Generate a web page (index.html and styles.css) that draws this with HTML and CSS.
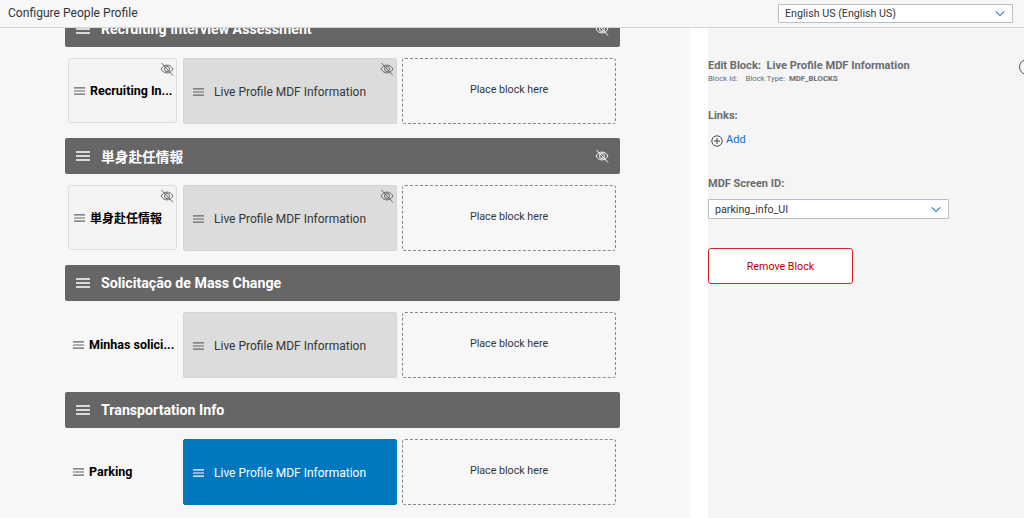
FILE: index.html
```html
<!DOCTYPE html>
<html lang="en">
<head>
<meta charset="utf-8">
<title>Configure People Profile</title>
<link rel="stylesheet" href="styles.css">
</head>
<body>
<svg class="defs" width="0" height="0" aria-hidden="true">
  <symbol id="menu" viewBox="0 0 14 10"><path d="M0 1h14M0 5h14M0 9h14" fill="none" stroke="currentColor" stroke-width="1.4"/></symbol>
  <symbol id="eye" viewBox="0 0 14 14"><g fill="none" stroke="currentColor" stroke-width="1"><path d="M1 7c1.6-2.6 3.6-3.9 6-3.9s4.400 1.300 6 3.900c-1.600 2.600-3.600 3.900-6 3.900S2.600 9.600 1 7z"/><circle cx="7" cy="7" r="2.500"/><path d="M1.500 1l11.500 12.500"/></g></symbol>
  <symbol id="chev" viewBox="0 0 12 8"><path d="M1 1.500l5 5 5-5" fill="none" stroke="currentColor" stroke-width="1.300"/></symbol>
</svg>
<header class="topbar">
  <h1 class="page-title">Configure People Profile</h1>
  <div class="select select-lang"><span>English US (English US)</span><svg class="chev"><use href="#chev"/></svg></div>
</header>
<div class="body">
  <main class="canvas">
    <div class="scroller">
      <section class="section">
        <div class="bar"><svg class="bar-menu"><use href="#menu"/></svg><span class="bar-title">Recruiting Interview Assessment</span><svg class="bar-eye"><use href="#eye"/></svg></div>
        <div class="row">
          <div class="sub boxed"><svg class="sub-menu"><use href="#menu"/></svg><span class="sub-title">Recruiting In...</span><svg class="eye-corner"><use href="#eye"/></svg></div>
          <div class="block"><svg class="block-menu"><use href="#menu"/></svg><span>Live Profile MDF Information</span><svg class="eye-corner"><use href="#eye"/></svg></div>
          <div class="slot">Place block here</div>
        </div>
      </section>
      <section class="section">
        <div class="bar"><svg class="bar-menu"><use href="#menu"/></svg><span class="bar-title bar-cjk" lang="ja">単身赴任情報</span><svg class="bar-eye"><use href="#eye"/></svg></div>
        <div class="row">
          <div class="sub boxed"><svg class="sub-menu"><use href="#menu"/></svg><span class="sub-title sub-cjk" lang="ja">単身赴任情報</span><svg class="eye-corner"><use href="#eye"/></svg></div>
          <div class="block"><svg class="block-menu"><use href="#menu"/></svg><span>Live Profile MDF Information</span><svg class="eye-corner"><use href="#eye"/></svg></div>
          <div class="slot">Place block here</div>
        </div>
      </section>
      <section class="section">
        <div class="bar"><svg class="bar-menu"><use href="#menu"/></svg><span class="bar-title">Solicitação de Mass Change</span></div>
        <div class="row">
          <div class="sub"><svg class="sub-menu"><use href="#menu"/></svg><span class="sub-title">Minhas solici...</span></div>
          <div class="block"><svg class="block-menu"><use href="#menu"/></svg><span>Live Profile MDF Information</span></div>
          <div class="slot">Place block here</div>
        </div>
      </section>
      <section class="section">
        <div class="bar"><svg class="bar-menu"><use href="#menu"/></svg><span class="bar-title">Transportation Info</span></div>
        <div class="row">
          <div class="sub"><svg class="sub-menu"><use href="#menu"/></svg><span class="sub-title">Parking</span></div>
          <div class="block selected"><svg class="block-menu"><use href="#menu"/></svg><span>Live Profile MDF Information</span></div>
          <div class="slot">Place block here</div>
        </div>
      </section>
    </div>
  </main>
  <aside class="panel">
    <div class="edit-head">
      <h2 class="edit-title">Edit Block:&nbsp; Live Profile MDF Information</h2>
      <span class="help"></span>
    </div>
    <p class="meta"><span>Block Id:</span><span>Block Type:&nbsp; <b>MDF_BLOCKS</b></span></p>
    <h3 class="label label-links">Links:</h3>
    <div class="add">
      <svg class="add-icon" viewBox="0 0 12 12"><g fill="none" stroke="#32363a" stroke-width="0.900"><circle cx="6" cy="6" r="5.200"/><path d="M6 3v6M3 6h6"/></g></svg>
      <span>Add</span>
    </div>
    <h3 class="label label-mdf">MDF Screen ID:</h3>
    <div class="select select-mdf"><span>parking_info_UI</span><svg class="chev"><use href="#chev"/></svg></div>
    <button class="remove" type="button">Remove Block</button>
  </aside>
</div>
</body>
</html>
```
FILE: styles.css
```css
* { box-sizing: border-box; }
html, body { margin: 0; height: 100%; }
body {
  width: 1024px;
  height: 518px;
  overflow: hidden;
  background: #fff;
  color: #32363a;
  font-family: Roboto, "Noto Sans CJK JP", sans-serif;
  display: flex;
  flex-direction: column;
}
.defs { position: absolute; }
.topbar {
  flex: none;
  height: 28px;
  background: #f7f7f7;
  border-bottom: 1px solid #d3d5d7;
  display: flex;
  align-items: flex-start;
  justify-content: space-between;
  padding: 4px 11px 0 8px;
  position: relative;
  z-index: 2;
}
.page-title { margin: 0; font-size: 12.100px; font-weight: 400; line-height: 19px; color: #32363a; }
.select {
  display: flex;
  align-items: center;
  justify-content: space-between;
  background: #fff;
  border: 1px solid #b5bfca;
  border-radius: 1px;
  height: 20px;
  font-size: 10.700px;
  color: #32363a;
}
.select-lang { width: 235px; height: 19px; padding: 0 7px 0 6px; }
.select-mdf { width: 241px; padding: 0 7px 0 6px; margin-top: 8px; }
.chev { width: 10px; height: 7px; color: #2b78c5; }
.body { flex: 1; display: flex; min-height: 0; }
.canvas { width: 690px; background: #f7f7f7; overflow: hidden; padding-left: 65px; }
.scroller { margin-top: -17px; width: 555px; }
.section { margin-bottom: 14px; }
.bar {
  height: 36px;
  background: #666;
  border-radius: 2px;
  color: #fff;
  display: flex;
  align-items: center;
  padding: 0 11px 0 11px;
}
.bar-menu { width: 14px; height: 10px; flex: none; }
.bar-title { margin-left: 11px; font-size: 14.200px; font-weight: 700; flex: 1; }
.bar-cjk { font-size: 13.700px; }
.bar-eye { width: 14px; height: 14px; color: #fff; }
.row {
  height: 66px;
  margin-top: 11px;
  display: flex;
  gap: 5px;
  padding-left: 3px;
  align-items: flex-start;
}
.sub {
  position: relative;
  width: 109px;
  margin-right: 1px;
  height: 65px;
  display: flex;
  align-items: center;
  padding-left: 4px;
  border: 1px solid transparent;
  border-radius: 3px;
}
.boxed { background: #f4f4f4; border-color: #dcdcdc; padding-left: 5px; }
.sub-menu { width: 11px; height: 8px; flex: none; color: #666; }
.sub-title { margin-left: 5px; font-size: 12.500px; font-weight: 700; color: #000; white-space: nowrap; }
.sub-cjk { font-size: 12px; }
.block {
  position: relative;
  width: 214px;
  height: 66px;
  background: #dcdcdc;
  border: 1px solid #d4d4d4;
  border-radius: 2px;
  display: flex;
  align-items: center;
  padding: 1px 0 0 9px;
  font-size: 12px;
  color: #32363a;
  white-space: nowrap;
}
.block-menu { width: 11px; height: 8px; flex: none; margin-right: 10px; color: #666; }
.selected { background: #0077bf; border-color: #0077bf; color: #fff; }
.selected .block-menu { color: #fff; }
.eye-corner { position: absolute; top: 3px; right: 2px; width: 14px; height: 14px; color: #666; }
.slot {
  width: 214px;
  height: 66px;
  border: 1px dashed #888;
  border-radius: 3px;
  display: flex;
  align-items: center;
  justify-content: center;
  padding-bottom: 4px;
  font-size: 10.700px;
  color: #32363a;
}
.panel {
  width: 316px;
  margin-left: 18px;
  background: #f5f5f5;
  overflow: hidden;
  padding-top: 30px;
}
.edit-head { display: flex; align-items: center; justify-content: space-between; height: 14px; }
.edit-title { margin: 0; font-size: 11.100px; font-weight: 700; color: #6a6d70; white-space: nowrap; }
.help {
  flex: none;
  width: 16px;
  height: 16px;
  margin-right: -11px;
  margin-top: 4px;
  border: 1px solid #555;
  border-radius: 50%;
}
.meta {
  margin: 2px 0 0;
  display: flex;
  gap: 8px;
  font-size: 7.800px;
  line-height: 10px;
  color: #6a6d70;
}
.meta b { font-weight: 700; }
.label { margin: 0; font-size: 11px; font-weight: 700; line-height: 14px; color: #6a6d70; }
.label-links { margin-top: 25px; }
.add { display: flex; align-items: center; gap: 3px; margin: 10px 0 0 3px; font-size: 11px; line-height: 14px; color: #0a6ed1; }
.add-icon { width: 12px; height: 12px; margin-top: 2px; }
.label-mdf { margin-top: 30px; }
.remove {
  display: block;
  width: 145px;
  height: 36px;
  margin-top: 29px;
  background: #fff;
  border: 1px solid #d9262c;
  border-radius: 3px;
  font: inherit;
  font-size: 10.700px;
  color: #bb0000;
  padding: 0;
}
```
